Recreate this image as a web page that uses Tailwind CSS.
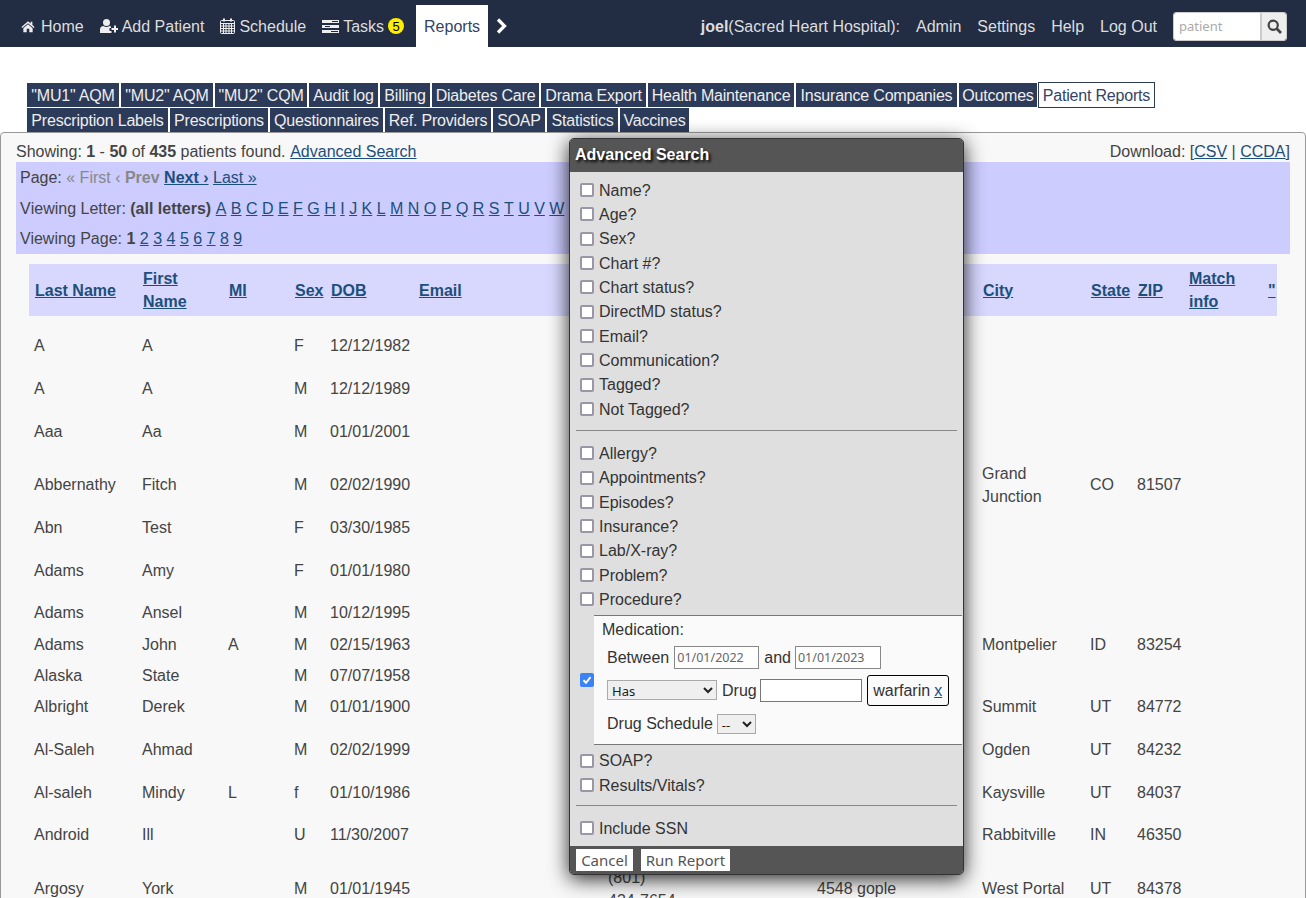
<!doctype html>
<html lang="en">
<head>
<meta charset="UTF-8" />
<title>Patient Reports</title>
<script src="https://cdn.jsdelivr.net/npm/@tailwindcss/browser@4"></script>
</head>
<body class="relative h-[898px] overflow-hidden bg-white font-['Liberation_Sans',sans-serif] text-[16px] leading-[23px] text-[#444]">

<!-- top nav -->
<nav class="flex h-[47px] items-end justify-between bg-[#222d44] pl-[13px] pr-[19px] text-[#ddd]">
  <div class="flex h-[42px] items-stretch">
    <a class="flex items-center gap-[6px] px-2">
      <svg class="w-[14px] h-[13px]" viewBox="0 0 16 14" fill="#eee"><path d="M8 1 L.5 7.5 L1.5 8.7 L8 3.2 L14.5 8.7 L15.5 7.5 L13 5.3 V1.5 H11 V3.6 Z M8 4.4 L2.7 8.9 V13.6 H6.5 V9.6 H9.5 V13.6 H13.3 V8.9 Z"/></svg>
      Home</a>
    <a class="flex items-center gap-[4px] px-2">
      <svg class="w-[18px] h-[14px]" viewBox="0 0 18 14" fill="#eee"><circle cx="6.5" cy="3.6" r="3.5"/><path d="M0 14 V10.5 C0 8.5 1.5 7 3.5 7 C5 8.3 8 8.3 9.5 7 C10 7 10.5 7.2 11 7.5 V9 H9.5 V12 H11.5 V14 Z"/><path d="M14 6.5 H16 V9 H18 V11 H16 V13.5 H14 V11 H11.5 V9 H14 Z"/></svg>
      Add Patient</a>
    <a class="flex items-center gap-[4px] px-2">
      <svg class="w-[15px] h-[16px]" viewBox="0 0 15 16" fill="none" stroke="#eee"><rect x=".5" y="2.5" width="14" height="13" rx="1"/><path d="M.5 5.5 H14.5 M.5 8 H14.5 M.5 10.5 H14.5 M.5 13 H14.5 M3.5 5.5 V15.5 M6 5.5 V15.5 M9 5.5 V15.5 M11.5 5.5 V15.5"/><path d="M4 .5 V3.5 M11 .5 V3.5" stroke-width="2"/></svg>
      Schedule</a>
    <a class="flex items-center gap-[4px] px-2">
      <svg class="w-[17px] h-[13px]" viewBox="0 0 17 13" fill="#eee"><path d="M0 0 H17 V3 H0 Z M0 5 H17 V8 H0 Z M0 10 H17 V13 H0 Z"/><path d="M10 1 H16 V2 H10 Z M3 6 H8 V7 H3 Z M9 11 H16 V12 H9 Z" fill="#222d44"/></svg>
      Tasks<span class="flex h-4 w-4 items-center justify-center rounded-full bg-[#ffee00] text-[13px] text-black">5</span></a>
    <a class="ml-[4px] flex items-center bg-white px-2 text-[#334466]">Reports</a>
    <a class="flex items-center px-2">
      <svg class="w-[11px] h-[16px]" viewBox="0 0 11 16" fill="none" stroke="#fff" stroke-width="3.2"><path d="M2 1.5 L8.5 8 L2 14.5"/></svg>
    </a>
  </div>
  <div class="flex h-[42px] items-center">
    <span class="mr-2"><b>joel</b>(Sacred Heart Hospital):</span>
    <a class="px-2">Admin</a>
    <a class="px-2">Settings</a>
    <a class="px-2">Help</a>
    <a class="px-2">Log Out</a>
    <div class="ml-2 flex h-[29px] w-[114px] overflow-hidden rounded-[3px] border border-[#ccc]">
      <input class="w-[86px] bg-white px-[5px] font-['Noto_Sans',sans-serif] text-[13px] text-[#333] placeholder:text-[#aaa]" placeholder="patient" />
      <span class="flex w-[28px] items-center justify-center border-l-2 border-[#ccc] bg-[#eee]">
        <svg class="w-[15px] h-[15px]" viewBox="0 0 15 15" fill="none" stroke="#444" stroke-width="2.2"><circle cx="6.2" cy="6.2" r="4.6"/><path d="M9.6 9.6 L14 14" stroke-width="2.8"/></svg>
      </span>
    </div>
  </div>
</nav>

<!-- report tabs -->
<div class="mt-[35px] flex flex-wrap items-center gap-x-[2px] pl-[27px] tracking-[-0.2px] text-[#eee] [&>a]:h-6 [&>a]:whitespace-nowrap [&>a]:bg-[#2d3b5a] [&>a]:text-center [&>a]:leading-[25px]">
  <a class="w-[92px]">"MU1" AQM</a><a class="w-[92px]">"MU2" AQM</a><a class="w-[92px]">"MU2" CQM</a><a class="w-[69px]">Audit log</a><a class="w-[50px]">Billing</a><a class="w-[107px]">Diabetes Care</a><a class="w-[105px]">Drama Export</a><a class="w-[146px]">Health Maintenance</a><a class="w-[161px]">Insurance Companies</a><a class="w-[78px]">Outcomes</a>
  <a class="-ml-px !h-[26px] w-[117px] border border-[#2d3b5a] !bg-white !text-[#334466]">Patient Reports</a>
  <div class="w-full"></div>
  <a class="w-[141px]">Prescription Labels</a><a class="w-[98px]">Prescriptions</a><a class="w-[113px]">Questionnaires</a><a class="w-[106px]">Ref. Providers</a><a class="w-[52px]">SOAP</a><a class="w-[71px]">Statistics</a><a class="w-[69px]">Vaccines</a>
</div>

<!-- report panel -->
<main class="h-[800px] rounded-[4px] border border-[#999] bg-[#f8f8f8] px-[15px] pt-[7px] [&_a.l]:text-[#1d4f7c] [&_a.l]:underline">
  <div class="flex h-[22px] justify-between">
    <div>Showing: <b>1</b> - <b>50</b> of <b>435</b> patients found. <a class="l ml-[0.2px]">Advanced Search</a></div>
    <div>Download: [<a class="l">CSV</a> | <a class="l">CCDA</a>]</div>
  </div>
  <div class="h-[92px] w-[1274px] bg-[#ccccff] pl-1">
    <div class="pt-[4px]">Page: <span class="text-[#888]">« First ‹ <b>Prev</b></span> <a class="l font-bold">Next ›</a> <a class="l">Last »</a></div>
    <div class="mt-[8px] whitespace-nowrap [font-kerning:none]">Viewing Letter: <b>(all letters)</b> <a class="l">A</a> <a class="l">B</a> <a class="l">C</a> <a class="l">D</a> <a class="l">E</a> <a class="l">F</a> <a class="l">G</a> <a class="l">H</a> <a class="l">I</a> <a class="l">J</a> <a class="l">K</a> <a class="l">L</a> <a class="l">M</a> <a class="l">N</a> <a class="l">O</a> <a class="l">P</a> <a class="l">Q</a> <a class="l">R</a> <a class="l">S</a> <a class="l">T</a> <a class="l">U</a> <a class="l">V</a> <a class="l">W</a></div>
    <div class="mt-[7px]">Viewing Page: <b>1</b> <a class="l">2</a> <a class="l">3</a> <a class="l">4</a> <a class="l">5</a> <a class="l">6</a> <a class="l">7</a> <a class="l">8</a> <a class="l">9</a></div>
  </div>

  <table class="ml-[13px] mt-[10px] w-[1248px] table-fixed border-collapse text-left [&_td]:pl-[5px] [&_td]:align-middle [&_th]:pl-[6px] [&_th]:align-middle">
    <colgroup>
      <col class="w-[108px]" /><col class="w-[86px]" /><col class="w-[66px]" /><col class="w-[36px]" /><col class="w-[88px]" /><col class="w-[190px]" /><col class="w-[209px]" /><col class="w-[165px]" /><col class="w-[108px]" /><col class="w-[47px]" /><col class="w-[51px]" /><col class="w-[80px]" /><col class="w-[14px]" />
    </colgroup>
    <thead class="bg-[#d8d8ff]">
      <tr class="h-[52px]">
        <th><a class="l">Last Name</a></th><th><a class="l">First Name</a></th><th><a class="l">MI</a></th><th><a class="l">Sex</a></th><th><a class="l">DOB</a></th><th><a class="l">Email</a></th><th></th><th></th><th><a class="l">City</a></th><th><a class="l">State</a></th><th><a class="l">ZIP</a></th><th><a class="l">Match info</a></th><th class="!pl-[5px]"><a class="l">"</a></th>
      </tr>
    </thead>
    <tbody>
      <tr class="h-[8px]"><td colspan="13" class="!p-0 leading-[0]"></td></tr>
      <tr class="h-[43px]"><td>A</td><td>A</td><td></td><td>F</td><td>12/12/1982</td><td></td><td></td><td></td><td></td><td></td><td></td><td></td><td></td></tr>
      <tr class="h-[43px]"><td>A</td><td>A</td><td></td><td>M</td><td>12/12/1989</td><td></td><td></td><td></td><td></td><td></td><td></td><td></td><td></td></tr>
      <tr class="h-[43px]"><td>Aaa</td><td>Aa</td><td></td><td>M</td><td>01/01/2001</td><td></td><td></td><td></td><td></td><td></td><td></td><td></td><td></td></tr>
      <tr class="h-[63px]"><td>Abbernathy</td><td>Fitch</td><td></td><td>M</td><td>02/02/1990</td><td></td><td></td><td></td><td>Grand Junction</td><td>CO</td><td>81507</td><td></td><td></td></tr>
      <tr class="h-[23px]"><td>Abn</td><td>Test</td><td></td><td>F</td><td>03/30/1985</td><td></td><td></td><td></td><td></td><td></td><td></td><td></td><td></td></tr>
      <tr class="h-[62px]"><td>Adams</td><td>Amy</td><td></td><td>F</td><td>01/01/1980</td><td></td><td></td><td></td><td></td><td></td><td></td><td></td><td></td></tr>
      <tr class="h-[23px]"><td>Adams</td><td>Ansel</td><td></td><td>M</td><td>10/12/1995</td><td></td><td></td><td></td><td></td><td></td><td></td><td></td><td></td></tr>
      <tr class="h-[40px]"><td>Adams</td><td>John</td><td>A</td><td>M</td><td>02/15/1963</td><td></td><td></td><td></td><td>Montpelier</td><td>ID</td><td>83254</td><td></td><td></td></tr>
      <tr class="h-[23px]"><td>Alaska</td><td>State</td><td></td><td>M</td><td>07/07/1958</td><td></td><td></td><td></td><td></td><td></td><td></td><td></td><td></td></tr>
      <tr class="h-[39px]"><td>Albright</td><td>Derek</td><td></td><td>M</td><td>01/01/1900</td><td></td><td></td><td></td><td>Summit</td><td>UT</td><td>84772</td><td></td><td></td></tr>
      <tr class="h-[47px]"><td>Al-Saleh</td><td>Ahmad</td><td></td><td>M</td><td>02/02/1999</td><td></td><td></td><td></td><td>Ogden</td><td>UT</td><td>84232</td><td></td><td></td></tr>
      <tr class="h-[39px]"><td>Al-saleh</td><td>Mindy</td><td>L</td><td>f</td><td>01/10/1986</td><td></td><td></td><td></td><td>Kaysville</td><td>UT</td><td>84037</td><td></td><td></td></tr>
      <tr class="h-[45px]"><td>Android</td><td>Ill</td><td></td><td>U</td><td>11/30/2007</td><td></td><td></td><td></td><td>Rabbitville</td><td>IN</td><td>46350</td><td></td><td></td></tr>
      <tr class="h-[63px]"><td>Argosy</td><td>York</td><td></td><td>M</td><td>01/01/1945</td><td></td><td>(801)<br />434-7654</td><td>4548 gople</td><td>West Portal</td><td>UT</td><td>84378</td><td></td><td></td></tr>
    </tbody>
  </table>
</main>

<!-- advanced search dialog -->
<section class="absolute left-[569px] top-[138px] flex h-[737px] w-[395px] flex-col overflow-hidden rounded-[5px] border border-[#333] bg-[#dfdfdf] text-[#333] shadow-[0_4px_20px_rgba(0,0,0,0.85)] [&_.r]:flex [&_.r]:h-[24.33px] [&_.r]:items-center [&_.r]:gap-[5px] [&_.r]:pl-[10px]">
  <h2 class="flex h-[33px] shrink-0 items-center bg-[#555] pb-[2px] pl-[5px] font-bold text-white [text-shadow:2px_2px_3px_#000]">Advanced Search</h2>
  <div class="flex-1 pt-[6px]">
    <div class="r"><span role="checkbox" aria-checked="false" class="size-[14px] rounded-[2px] border-2 border-[#9a96a8] bg-white"></span>Name?</div>
    <div class="r"><span role="checkbox" aria-checked="false" class="size-[14px] rounded-[2px] border-2 border-[#9a96a8] bg-white"></span>Age?</div>
    <div class="r"><span role="checkbox" aria-checked="false" class="size-[14px] rounded-[2px] border-2 border-[#9a96a8] bg-white"></span>Sex?</div>
    <div class="r"><span role="checkbox" aria-checked="false" class="size-[14px] rounded-[2px] border-2 border-[#9a96a8] bg-white"></span>Chart #?</div>
    <div class="r"><span role="checkbox" aria-checked="false" class="size-[14px] rounded-[2px] border-2 border-[#9a96a8] bg-white"></span>Chart status?</div>
    <div class="r"><span role="checkbox" aria-checked="false" class="size-[14px] rounded-[2px] border-2 border-[#9a96a8] bg-white"></span>DirectMD status?</div>
    <div class="r"><span role="checkbox" aria-checked="false" class="size-[14px] rounded-[2px] border-2 border-[#9a96a8] bg-white"></span>Email?</div>
    <div class="r"><span role="checkbox" aria-checked="false" class="size-[14px] rounded-[2px] border-2 border-[#9a96a8] bg-white"></span>Communication?</div>
    <div class="r"><span role="checkbox" aria-checked="false" class="size-[14px] rounded-[2px] border-2 border-[#9a96a8] bg-white"></span>Tagged?</div>
    <div class="r"><span role="checkbox" aria-checked="false" class="size-[14px] rounded-[2px] border-2 border-[#9a96a8] bg-white"></span>Not Tagged?</div>
    <hr class="mx-[6px] mb-[10px] mt-[9px] w-[381px] border-t border-[#888]" />
    <div class="r"><span role="checkbox" aria-checked="false" class="size-[14px] rounded-[2px] border-2 border-[#9a96a8] bg-white"></span>Allergy?</div>
    <div class="r"><span role="checkbox" aria-checked="false" class="size-[14px] rounded-[2px] border-2 border-[#9a96a8] bg-white"></span>Appointments?</div>
    <div class="r"><span role="checkbox" aria-checked="false" class="size-[14px] rounded-[2px] border-2 border-[#9a96a8] bg-white"></span>Episodes?</div>
    <div class="r"><span role="checkbox" aria-checked="false" class="size-[14px] rounded-[2px] border-2 border-[#9a96a8] bg-white"></span>Insurance?</div>
    <div class="r"><span role="checkbox" aria-checked="false" class="size-[14px] rounded-[2px] border-2 border-[#9a96a8] bg-white"></span>Lab/X-ray?</div>
    <div class="r"><span role="checkbox" aria-checked="false" class="size-[14px] rounded-[2px] border-2 border-[#9a96a8] bg-white"></span>Problem?</div>
    <div class="r"><span role="checkbox" aria-checked="false" class="size-[14px] rounded-[2px] border-2 border-[#9a96a8] bg-white"></span>Procedure?</div>

    <div class="mt-[3px] flex h-[130px] items-center">
      <span role="checkbox" aria-checked="true" class="ml-[10px] flex size-[14px] shrink-0 items-center justify-center rounded-[2px] bg-[#3b82f6]">
        <svg class="size-[10px]" viewBox="0 0 10 10" fill="none" stroke="#fff" stroke-width="2"><path d="M1.5 5.2 L4 7.8 L8.5 2.2"/></svg>
      </span>
      <div class="h-full w-[368px] border-y border-[#777] bg-[#fafafa] pl-[8px] pt-[2px]">
        <div>Medication:</div>
        <div class="mt-[5px] flex h-[24px] items-center pl-[5px]">
          Between
          <input value="01/01/2022" class="ml-[5px] h-[23px] w-[85px] border border-[#888] bg-white px-[2px] font-['Noto_Sans',sans-serif] text-[12.5px] text-[#666]" />
          <span class="ml-[5px] mr-[4px]">and</span>
          <input value="01/01/2023" class="h-[23px] w-[86px] border border-[#888] bg-white px-[2px] font-['Noto_Sans',sans-serif] text-[12.5px] text-[#666]" />
        </div>
        <div class="mt-[5px] flex h-[31px] items-center pl-[5px]">
          <select class="h-[20px] w-[110px] border border-[#aaa] bg-[#efefef] font-['Noto_Sans',sans-serif] text-[13px] text-[#222]"><option>Has</option></select>
          <span class="ml-[5px] mr-[3px]">Drug</span>
          <input class="h-[23px] w-[102px] border border-[#777] bg-white" />
          <span class="ml-[5px] flex h-[31px] w-[82px] items-center justify-center gap-[4px] rounded-[3px] border border-black bg-[#fafafa]">warfarin <a class="text-[#1d4f7c] underline">x</a></span>
        </div>
        <div class="mt-[7px] flex h-[22px] items-center pl-[5px]">
          Drug Schedule
          <select class="ml-[4px] h-[20px] w-[39px] border border-[#aaa] bg-[#efefef] font-['Noto_Sans',sans-serif] text-[13px] text-[#222]"><option>--</option></select>
        </div>
      </div>
    </div>

    <div class="h-[4px]"></div>
    <div class="r"><span role="checkbox" aria-checked="false" class="size-[14px] rounded-[2px] border-2 border-[#9a96a8] bg-white"></span>SOAP?</div>
    <div class="r"><span role="checkbox" aria-checked="false" class="size-[14px] rounded-[2px] border-2 border-[#9a96a8] bg-white"></span>Results/Vitals?</div>
    <hr class="mx-[6px] mb-[10px] mt-[8px] w-[381px] border-t border-[#888]" />
    <div class="r"><span role="checkbox" aria-checked="false" class="size-[14px] rounded-[2px] border-2 border-[#9a96a8] bg-white"></span>Include SSN</div>
  </div>
  <footer class="flex h-[28px] shrink-0 items-center gap-2 bg-[#555] pl-[6px] font-['Noto_Sans',sans-serif] text-[15px] text-[#555]">
    <button class="h-[22px] w-[57px] bg-white">Cancel</button>
    <button class="h-[22px] w-[89px] bg-white">Run Report</button>
  </footer>
</section>

</body>
</html>
